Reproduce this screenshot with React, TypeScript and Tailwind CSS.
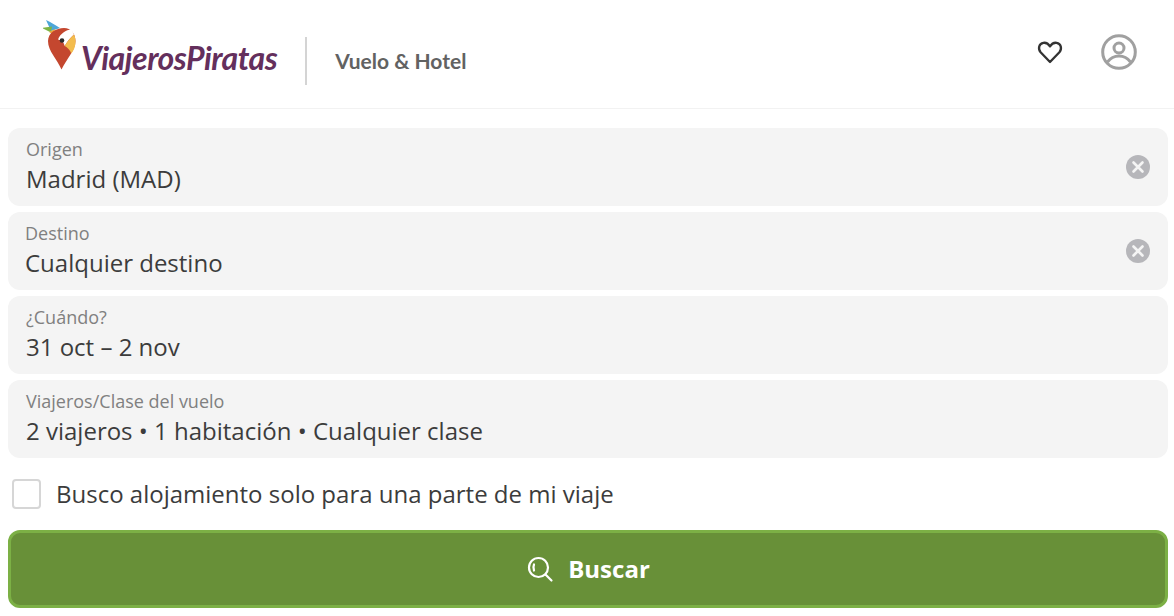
import React from "react";

const Field = ({ label, value, clear, pad = "pl-[18px]" }: { label: string; value: string; clear?: boolean; pad?: string }) => (
  <div className={`flex h-[78px] items-center justify-between rounded-[12px] bg-[#f4f4f4] pr-[18px] ${pad}`}>
    <div className="flex flex-col">
      <span className="-mt-[2px] text-[18px] leading-[24px] text-[#808080]">{label}</span>
      <span className="mt-[2px] text-[24px] leading-[32px] text-[#3c3c3c]">{value}</span>
    </div>
    {clear && (
      <svg width="24" height="24" viewBox="0 0 24 24">
        <circle cx="12" cy="12" r="12" fill="#b6b6ba" />
        <path d="M7.500 7.500l9 9M16.500 7.500l-9 9" stroke="#f4f4f4" strokeWidth="2.600" strokeLinecap="round" />
      </svg>
    )}
  </div>
);

const Parrot = () => (
  <svg width="34" height="50" viewBox="0 0 34 50" className="shrink-0">
    <path d="M3 0c5 2 9 5 14 8l-9 3z" fill="#4da6d8" />
    <path d="M-1 8l10-1.500-1 6z" fill="#7db544" />
    <path d="M6 12l6-3-1 6z" fill="#f0a63c" />
    <path d="M5 21C5 13 13 8 21 8c7 0 11.500 6 11.500 13 0 9-9 18-14 28.500C14 39 5 31 5 21z" fill="#c4472f" />
    <path d="M15 19.500C17 14 23 9.500 28.500 9.500L31 14.500C27 18 24 22 21.700 26 21 22.500 18.500 20 15 19.500z" fill="#fff" />
    <circle cx="19" cy="20.500" r="2.300" fill="#2b2b2b" />
    <path d="M31 14.500c1.500 3 1.800 6.500 1.300 10-.5 3.500-2 6.500-4 9C27 30 24.500 27.500 21.700 26 24 22 27 18 31 14.500z" fill="#f3bc4d" />
  </svg>
);

export default function App() {
  return (
    <div className="h-[616px] w-[1174px] overflow-hidden bg-white font-['Open_Sans',sans-serif]">
      <header className="flex h-[109px] items-center justify-between border-b border-[#f2f2f2] pl-[43px] pr-[37px]">
        <div className="flex items-center">
          <div className="flex items-end">
            <div className="mb-[18px]">
              <Parrot />
            </div>
            <span className="mb-[11px] ml-[4px] font-['Lato',sans-serif] text-[32px] leading-[38px] font-bold tracking-[-0.5px] text-[#642f5c] italic">
              ViajerosPiratas
            </span>
          </div>
          <div className="mt-[14px] ml-[28px] h-[48px] w-[2px] bg-[#d4d4d4]" />
          <span className="mt-[14px] ml-[28px] font-['Lato',sans-serif] text-[21px] font-bold text-[#626262]">
            Vuelo &amp; Hotel
          </span>
        </div>
        <div className="mb-[4px] flex items-center gap-[37px]">
          <svg width="28" height="28" viewBox="0 0 28 28" fill="none" stroke="#333" strokeWidth="2.300" strokeLinejoin="round">
            <path d="M14 24L4.600 14.200C1.800 11 2.800 5.500 7.400 4.800c2.800-.4 5 1 6.600 3.600 1.600-2.600 3.800-4 6.600-3.600 4.600.7 5.600 6.200 2.800 9.400z" />
          </svg>
          <svg width="36" height="36" viewBox="0 0 36 36" fill="none" stroke="#a0a0a0" strokeWidth="3">
            <circle cx="18" cy="18" r="16.300" />
            <circle cx="18" cy="14" r="5" />
            <path d="M6.500 28c3-4 7-6 11.500-6s8.500 2 11.500 6" />
          </svg>
        </div>
      </header>
      <main className="flex flex-col pl-[8px] pr-[6px] pt-[19px]">
        <div className="flex flex-col gap-[6px]">
          <Field label="Origen" value="Madrid (MAD)" clear />
          <Field label="Destino" value="Cualquier destino" clear pad="pl-[17px]" />
          <Field label="¿Cuándo?" value="31 oct – 2 nov" />
          <Field label="Viajeros/Clase del vuelo" value="2 viajeros • 1 habitación • Cualquier clase" />
        </div>
        <label className="mt-[21px] flex items-center pl-[4px]">
          <span className="h-[30px] w-[29px] rounded-[4px] border-2 border-[#d6d6d6] bg-white" />
          <span className="ml-[15px] text-[24px] leading-[30px] text-[#3c3c3c]">
            Busco alojamiento solo para una parte de mi viaje
          </span>
        </label>
        <button className="mt-[21px] flex h-[78px] items-center justify-center gap-[14px] rounded-[12px] border-[3px] border-[#7cb045] bg-[#689038] text-white">
          <svg width="28" height="28" viewBox="0 0 28 28" fill="none" stroke="#fff" strokeWidth="2.200" strokeLinecap="round">
            <circle cx="12.500" cy="12.500" r="9.500" />
            <path d="M19.500 19.500l6 6" />
            <path d="M8 9.500c-.8 1.800-.8 4 0 6" />
          </svg>
          <span className="text-[24px] leading-[32px] font-bold">Buscar</span>
        </button>
      </main>
    </div>
  );
}
